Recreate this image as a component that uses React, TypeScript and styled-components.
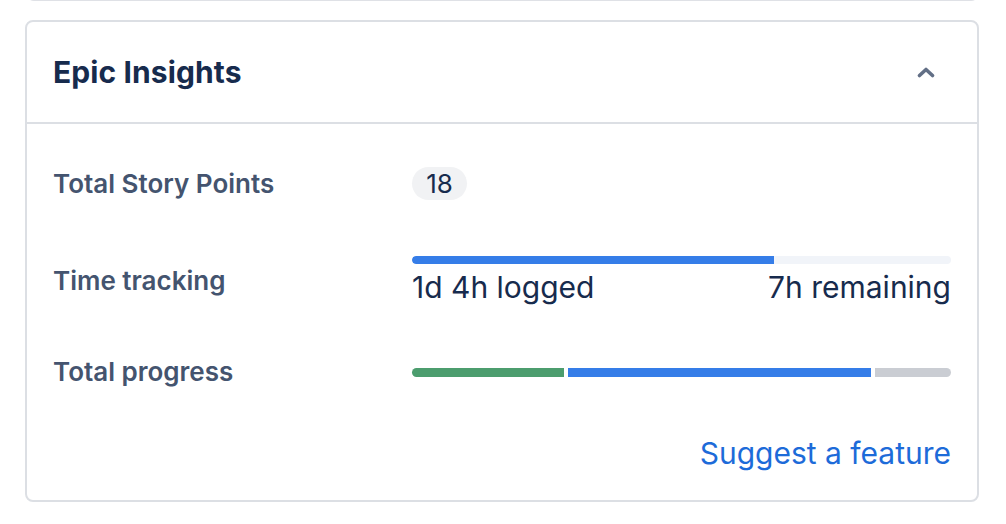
import React from "react";
import styled, { createGlobalStyle } from "styled-components";

const Global = createGlobalStyle`
  html, body { margin: 0; padding: 0; background: #ffffff; }
  body { font-family: Inter, "Noto Sans", sans-serif; -webkit-font-smoothing: antialiased; }
  * { box-sizing: border-box; }
`;

const Page = styled.div`
  width: 1006px;
  height: 524px;
  padding: 0 27px 0 25px;
  display: flex;
  flex-direction: column;
  gap: 19px;
  overflow: hidden;
`;

const PrevCardEdge = styled.div`
  height: 10px;
  margin: -9px 0 0 1px;
  border: 2px solid #dfe1e6;
  border-top: none;
  border-radius: 0 0 8px 8px;
`;

const Card = styled.section`
  border: 2px solid #dcdfe4;
  border-radius: 8px;
  background: #ffffff;
`;

const Header = styled.header`
  height: 102px;
  padding: 0 35px 0 26px;
  display: flex;
  align-items: center;
  justify-content: space-between;
  border-bottom: 2px solid #dcdfe4;
`;

const Title = styled.h2`
  margin: 0;
  font-size: 30px;
  font-weight: 700;
  color: #172b4d;
  letter-spacing: 0.1px;
`;

const ToggleButton = styled.button`
  width: 32px;
  height: 32px;
  border: none;
  background: transparent;
  padding: 0;
  display: flex;
  align-items: center;
  justify-content: center;
  color: #626f86;
`;

const Body = styled.div`
  padding: 0 26px 29px 26px;
  display: flex;
  flex-direction: column;
`;

const Row = styled.div<{ $top: number }>`
  display: grid;
  grid-template-columns: 359px 1fr;
  align-items: center;
  margin-top: ${(p) => p.$top}px;
`;

const Label = styled.div`
  font-size: 26px;
  line-height: 32px;
  font-weight: 600;
  color: #44546f;
`;

const Badge = styled.span`
  display: inline-flex;
  align-items: center;
  justify-content: center;
  width: 55px;
  height: 33px;
  border-radius: 17px;
  background: #f1f2f4;
  color: #172b4d;
  font-size: 26px;
  justify-self: start;
`;

const TimeBlock = styled.div`
  display: flex;
  flex-direction: column;
`;

const Track = styled.div`
  height: 8px;
  border-radius: 4px;
  background: #f1f4f9;
  overflow: hidden;
  display: flex;
`;

const TrackFill = styled.div`
  height: 100%;
  background: #357de8;
  border-radius: 4px 0 0 4px;
`;

const TimeText = styled.div`
  display: flex;
  justify-content: space-between;
  padding-top: 5px;
  font-size: 30px;
  line-height: 36px;
  color: #172b4d;
`;

const Segments = styled.div`
  display: flex;
  gap: 4px;
  height: 9px;
`;

const Segment = styled.div<{ $color: string; $grow: number; $pos: "start" | "mid" | "end" }>`
  flex: ${(p) => p.$grow} 1 0;
  background: ${(p) => p.$color};
  border-radius: ${(p) =>
    p.$pos === "start" ? "5px 0 0 5px" : p.$pos === "end" ? "0 5px 5px 0" : "0"};
`;

const Footer = styled.div`
  display: flex;
  justify-content: flex-end;
  margin-top: 47px;
`;

const Link = styled.a`
  font-size: 30px;
  line-height: 36px;
  color: #1d6bd9;
  text-decoration: none;
  cursor: pointer;
`;

const ChevronUp = () => (
  <svg width="18" height="12" viewBox="0 0 18 12" fill="none">
    <path
      d="M2.5 9.5 L9 3.5 L15.5 9.5"
      stroke="currentColor"
      strokeWidth="3.6"
      strokeLinecap="round"
      strokeLinejoin="round"
    />
  </svg>
);

export default function App() {
  const loggedPct = 67.2;
  return (
    <>
      <Global />
      <Page>
        <PrevCardEdge />
        <Card>
          <Header>
            <Title>Epic Insights</Title>
            <ToggleButton aria-label="Collapse">
              <ChevronUp />
            </ToggleButton>
          </Header>
          <Body>
            <Row $top={43}>
              <Label>Total Story Points</Label>
              <Badge>18</Badge>
            </Row>
            <Row $top={56}>
              <Label>Time tracking</Label>
              <TimeBlock>
                <Track>
                  <TrackFill style={{ width: `${loggedPct}%` }} />
                </Track>
                <TimeText>
                  <span>1d 4h logged</span>
                  <span>7h remaining</span>
                </TimeText>
              </TimeBlock>
            </Row>
            <Row $top={51}>
              <Label>Total progress</Label>
              <Segments>
                <Segment $color="#4c9d6e" $grow={2} $pos="start" />
                <Segment $color="#357de8" $grow={4} $pos="mid" />
                <Segment $color="#cacdd3" $grow={1} $pos="end" />
              </Segments>
            </Row>
            <Footer>
              <Link>Suggest a feature</Link>
            </Footer>
          </Body>
        </Card>
      </Page>
    </>
  );
}
